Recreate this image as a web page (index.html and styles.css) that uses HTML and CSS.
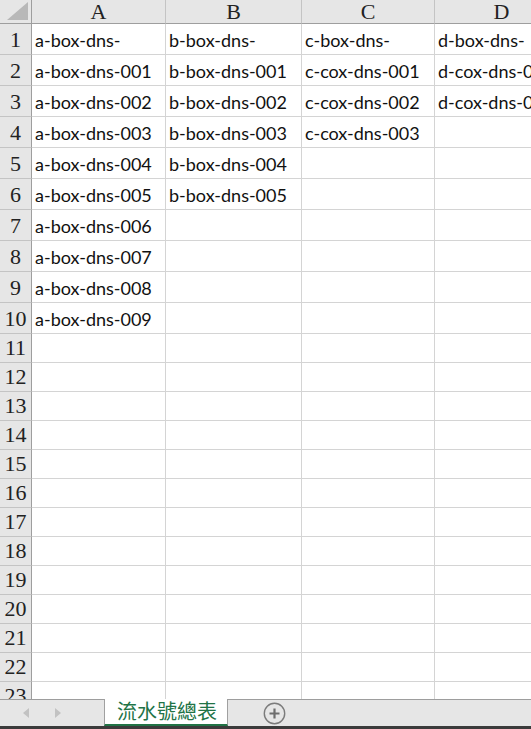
FILE: index.html
```html
<!DOCTYPE html>
<html lang="zh-Hant">
<head>
<meta charset="utf-8">
<title>流水號總表</title>
<link rel="stylesheet" href="styles.css">
</head>
<body>
<div class="sheet">
  <div class="grid">
    <div class="corner"><span class="tri"></span></div>
    <div class="colhead">A</div>
    <div class="colhead">B</div>
    <div class="colhead">C</div>
    <div class="colhead">D</div>

    <div class="rowhead">1</div><div class="cell">a-box-dns-</div><div class="cell">b-box-dns-</div><div class="cell">c-box-dns-</div><div class="cell">d-box-dns-</div>
    <div class="rowhead">2</div><div class="cell">a-box-dns-001</div><div class="cell">b-box-dns-001</div><div class="cell">c-cox-dns-001</div><div class="cell">d-cox-dns-001</div>
    <div class="rowhead">3</div><div class="cell">a-box-dns-002</div><div class="cell">b-box-dns-002</div><div class="cell">c-cox-dns-002</div><div class="cell">d-cox-dns-002</div>
    <div class="rowhead">4</div><div class="cell">a-box-dns-003</div><div class="cell">b-box-dns-003</div><div class="cell">c-cox-dns-003</div><div class="cell"></div>
    <div class="rowhead">5</div><div class="cell">a-box-dns-004</div><div class="cell">b-box-dns-004</div><div class="cell"></div><div class="cell"></div>
    <div class="rowhead">6</div><div class="cell">a-box-dns-005</div><div class="cell">b-box-dns-005</div><div class="cell"></div><div class="cell"></div>
    <div class="rowhead">7</div><div class="cell">a-box-dns-006</div><div class="cell"></div><div class="cell"></div><div class="cell"></div>
    <div class="rowhead">8</div><div class="cell">a-box-dns-007</div><div class="cell"></div><div class="cell"></div><div class="cell"></div>
    <div class="rowhead">9</div><div class="cell">a-box-dns-008</div><div class="cell"></div><div class="cell"></div><div class="cell"></div>
    <div class="rowhead">10</div><div class="cell">a-box-dns-009</div><div class="cell"></div><div class="cell"></div><div class="cell"></div>
    <div class="rowhead">11</div><div class="cell"></div><div class="cell"></div><div class="cell"></div><div class="cell"></div>
    <div class="rowhead">12</div><div class="cell"></div><div class="cell"></div><div class="cell"></div><div class="cell"></div>
    <div class="rowhead">13</div><div class="cell"></div><div class="cell"></div><div class="cell"></div><div class="cell"></div>
    <div class="rowhead">14</div><div class="cell"></div><div class="cell"></div><div class="cell"></div><div class="cell"></div>
    <div class="rowhead">15</div><div class="cell"></div><div class="cell"></div><div class="cell"></div><div class="cell"></div>
    <div class="rowhead">16</div><div class="cell"></div><div class="cell"></div><div class="cell"></div><div class="cell"></div>
    <div class="rowhead">17</div><div class="cell"></div><div class="cell"></div><div class="cell"></div><div class="cell"></div>
    <div class="rowhead">18</div><div class="cell"></div><div class="cell"></div><div class="cell"></div><div class="cell"></div>
    <div class="rowhead">19</div><div class="cell"></div><div class="cell"></div><div class="cell"></div><div class="cell"></div>
    <div class="rowhead">20</div><div class="cell"></div><div class="cell"></div><div class="cell"></div><div class="cell"></div>
    <div class="rowhead">21</div><div class="cell"></div><div class="cell"></div><div class="cell"></div><div class="cell"></div>
    <div class="rowhead">22</div><div class="cell"></div><div class="cell"></div><div class="cell"></div><div class="cell"></div>
    <div class="rowhead">23</div><div class="cell"></div><div class="cell"></div><div class="cell"></div><div class="cell"></div>
  </div>
</div>
<div class="tabbar">
  <div class="nav">
    <span class="arrow left"></span>
    <span class="arrow right"></span>
  </div>
  <div class="tab">流水號總表</div>
  <div class="add">
    <svg width="23" height="23" viewBox="0 0 23 23">
      <circle cx="11.5" cy="11.5" r="10.2" fill="none" stroke="#7b7b7b" stroke-width="1.4"/>
      <path d="M11.5 6.5v10M6.5 11.5h10" stroke="#6e6e6e" stroke-width="2.2" fill="none"/>
    </svg>
  </div>
</div>
<div class="statusbar"></div>
</body>
</html>
```

FILE: styles.css
```css
html, body {
  margin: 0;
  padding: 0;
  background: #ffffff;
}
body {
  width: 531px;
  height: 729px;
  overflow: hidden;
  display: flex;
  flex-direction: column;
}
.sheet {
  height: 699px;
  overflow: hidden;
  flex: none;
}
.grid {
  display: grid;
  grid-template-columns: 32px 134px 136px 133px 134px;
  grid-template-rows: 24px repeat(10, 31px) repeat(13, 29px);
  width: 569px;
}
.grid > div {
  box-sizing: border-box;
  white-space: nowrap;
}
.corner {
  position: relative;
  background: #e6e6e6;
  border-right: 1px solid #9e9e9e;
  border-bottom: 1px solid #9e9e9e;
}
.tri {
  position: absolute;
  right: 3px;
  bottom: 3px;
  width: 0;
  height: 0;
  border-left: 21px solid transparent;
  border-bottom: 18px solid #b8b8b8;
}
.colhead {
  background: #e6e6e6;
  border-right: 1px solid #c4c4c4;
  border-bottom: 1px solid #9e9e9e;
  font-family: "Liberation Serif", "Times New Roman", serif;
  font-size: 22px;
  line-height: 23px;
  text-align: center;
  color: #222;
}
.rowhead {
  background: #e6e6e6;
  border-right: 1px solid #9e9e9e;
  border-bottom: 1px solid #c4c4c4;
  font-family: "Liberation Serif", "Times New Roman", serif;
  font-size: 22px;
  line-height: 1;
  color: #222;
  display: flex;
  align-items: flex-end;
  justify-content: center;
  padding-bottom: 3px;
}
.cell {
  border-right: 1px solid #d4d4d4;
  border-bottom: 1px solid #d4d4d4;
  font-family: Lato, "Liberation Sans", sans-serif;
  font-size: 18px;
  line-height: 1;
  color: #111;
  display: flex;
  align-items: flex-end;
  padding: 0 0 5px 3px;
}
.tabbar {
  flex: none;
  height: 27px;
  box-sizing: border-box;
  border-top: 1px solid #9d9d9d;
  background: #e6e6e6;
  display: flex;
  align-items: stretch;
}
.nav {
  width: 104px;
  display: flex;
  align-items: center;
  padding-left: 23px;
  gap: 26px;
  box-sizing: border-box;
}
.arrow {
  width: 0;
  height: 0;
  border-top: 5px solid transparent;
  border-bottom: 5px solid transparent;
}
.arrow.left {
  border-right: 6px solid #c2c2c2;
}
.arrow.right {
  border-left: 6px solid #c2c2c2;
}
.tab {
  width: 124px;
  margin-top: -1px;
  box-sizing: border-box;
  background: #ffffff;
  border-left: 1px solid #a0a0a0;
  border-right: 1px solid #a0a0a0;
  border-bottom: 2px solid #217346;
  font-family: "Noto Sans CJK TC", "Noto Sans CJK SC", sans-serif;
  font-size: 20px;
  line-height: 24px;
  color: #217346;
  padding-left: 12px;
}
.add {
  margin-left: 35px;
  display: flex;
  align-items: center;
}
.add svg {
  display: block;
}
.statusbar {
  flex: none;
  height: 3px;
  background: #3b3b3b;
}
```
